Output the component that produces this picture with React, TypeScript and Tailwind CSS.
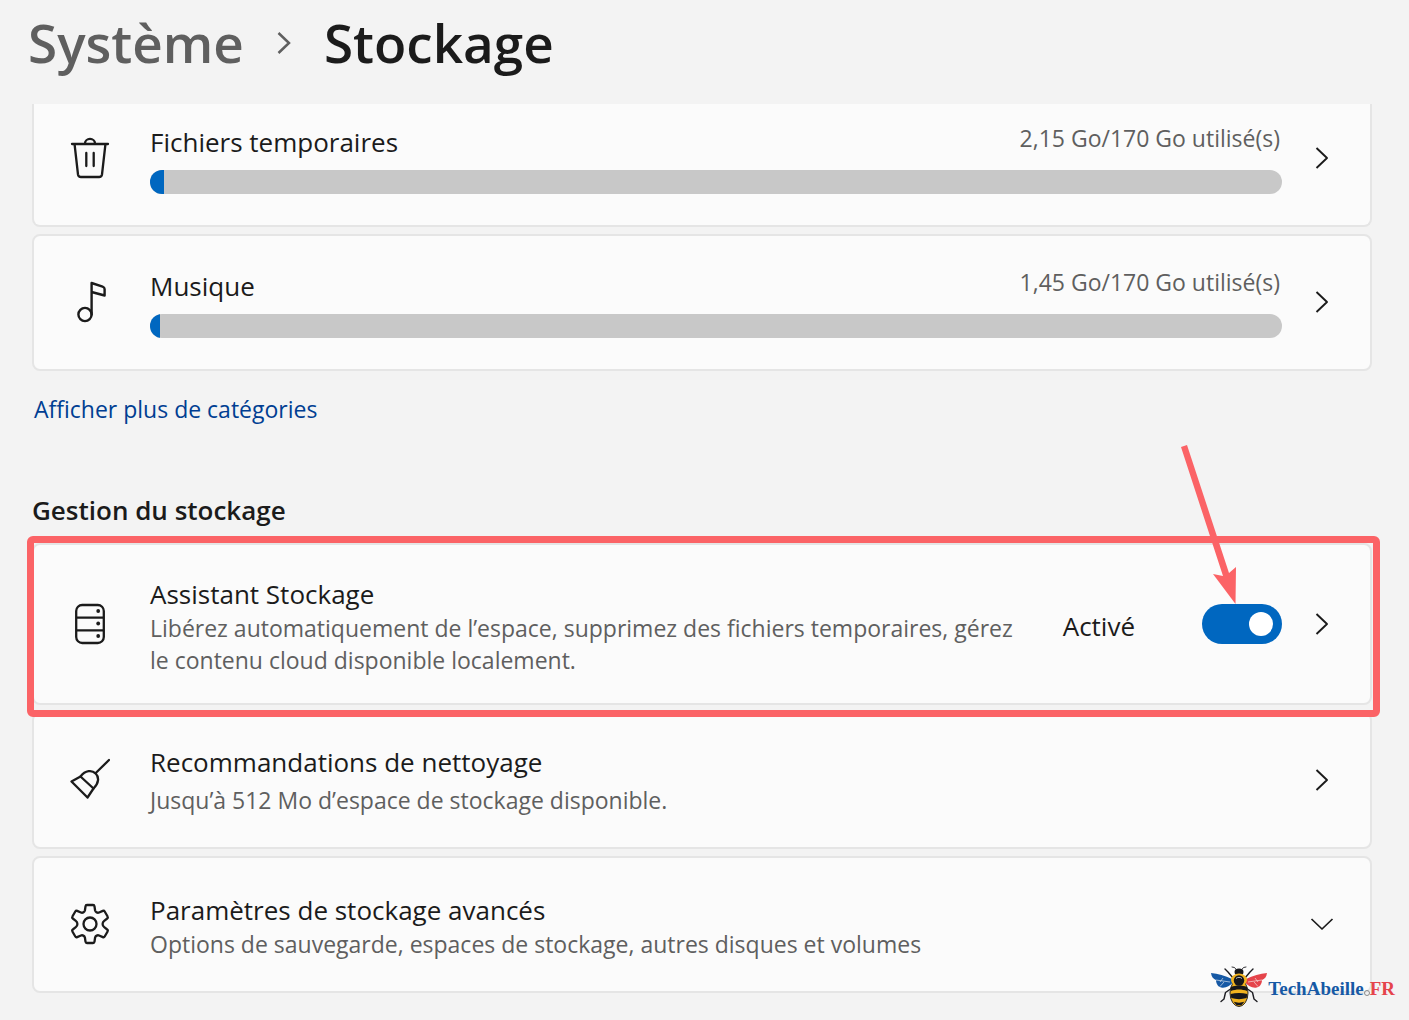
import { useState } from "react";
import type { ReactNode } from "react";

const usage = [
  { name: "Fichiers temporaires", label: "2,15 Go/170 Go utilisé(s)", used: 2.15, total: 170, icon: <TrashIcon /> },
  { name: "Musique", label: "1,45 Go/170 Go utilisé(s)", used: 1.45, total: 170, icon: <MusicIcon /> },
];

function TrashIcon() {
  return (
    <svg width="40" height="44" viewBox="0 0 40 44" fill="none" stroke="#1b1b1b" strokeWidth="2.3" strokeLinecap="round" strokeLinejoin="round">
      <path d="M2 8h36" />
      <path d="M15 7.5a5 4.6 0 0 1 10 0" />
      <path d="M4.6 8.5 8 38.5a3 3 0 0 0 3 2.5h18a3 3 0 0 0 3-2.5L35.4 8.5" />
      <path d="M16.3 17v13M23.7 17v13" />
    </svg>
  );
}

function MusicIcon() {
  return (
    <svg width="40" height="44" viewBox="0 0 40 44" fill="none" stroke="#1b1b1b" strokeWidth="2.4" strokeLinecap="round" strokeLinejoin="round">
      <circle cx="15" cy="34.5" r="6.6" />
      <path d="M21.6 34.5V3l11 3.6q2 .7 2 2.5v6.4L21.6 12" />
    </svg>
  );
}

function DrivesIcon() {
  return (
    <svg width="40" height="44" viewBox="0 0 40 44" fill="none" stroke="#1b1b1b" strokeWidth="2.3">
      <rect x="6.2" y="3" width="27.6" height="38" rx="6" />
      <path d="M6.2 15.7h27.6M6.2 28.3h27.6" />
      <g fill="#1b1b1b" stroke="none">
        <circle cx="28.2" cy="9" r="1.9" />
        <circle cx="28.2" cy="21.5" r="1.9" />
        <circle cx="28.2" cy="34" r="1.9" />
      </g>
    </svg>
  );
}

function BroomIcon() {
  return (
    <svg width="40" height="44" viewBox="0 0 40 44" fill="none" stroke="#1b1b1b" strokeWidth="2.3" strokeLinecap="round" strokeLinejoin="round">
      <path d="M39 2 25.5 15.3" />
      <path d="M10.5 18.5C15.5 12 22 12 25.5 15.3c3.7 3.7 3.7 9.5-2 15.2L17.5 39.5 1.5 23.5z" />
      <path d="M10.5 18.5 23.5 30.5" />
    </svg>
  );
}

function GearIcon() {
  return (
    <svg width="44" height="44" viewBox="0 0 44 44" fill="none" stroke="#1b1b1b" strokeWidth="2.3" strokeLinejoin="round">
      <circle cx="22" cy="22" r="6.5" />
      <path d="M19 3h6a1.500 1.500 0 0 1 1.500 1.300l.6 4.200a3 3 0 0 0 4 2l3.700-1.600a1.500 1.500 0 0 1 1.900.6l2.900 5a1.500 1.500 0 0 1-.4 2l-3 2.300a4 4 0 0 0 0 6.400l3 2.300a1.500 1.500 0 0 1 .4 2l-2.900 5a1.500 1.500 0 0 1-1.900.6l-3.700-1.600a3 3 0 0 0-4 2l-.6 4.200A1.500 1.500 0 0 1 25 41h-6a1.500 1.500 0 0 1-1.500-1.300l-.6-4.200a3 3 0 0 0-4-2l-3.700 1.600a1.500 1.500 0 0 1-1.900-.6l-2.900-5a1.500 1.500 0 0 1 .4-2l3-2.300a4 4 0 0 0 0-6.400l-3-2.300a1.500 1.500 0 0 1-.4-2l2.900-5a1.500 1.500 0 0 1 1.900-.6l3.700 1.600a3 3 0 0 0 4-2l.6-4.200A1.500 1.500 0 0 1 19 3z" />
    </svg>
  );
}

function ChevronRight() {
  return (
    <svg width="16" height="24" viewBox="0 0 16 24" fill="none" stroke="#1b1b1b" strokeWidth="1.9" strokeLinejoin="round">
      <path d="M2.5 2 13 12 2.5 22" />
    </svg>
  );
}

function ChevronDown() {
  return (
    <svg width="24" height="16" viewBox="0 0 24 16" fill="none" stroke="#1b1b1b" strokeWidth="1.7" strokeLinejoin="round">
      <path d="M1.5 3 12 13 22.5 3" />
    </svg>
  );
}

function Bee() {
  return (
    <svg width="58" height="44" viewBox="0 0 58 44">
      {/* legs and antennae */}
      <g fill="none" stroke="#1d1d22" strokeWidth="1.4" strokeLinecap="round" strokeLinejoin="round">
        <path d="M27 5.5 24.5 2.5 22 2M31 5.5 33.5 2.5 36 2" strokeWidth="0.9" />
        <path d="M23 13 18 7 15 4M35 13 40 7 43 4" />
        <path d="M22 23 15.5 27.5 14 34 11 36.5M36 23 42.5 27.5 44 34 47 36.5" />
      </g>
      {/* wings */}
      <path d="M22 14C15 11 8 8.5 1 8c.5 4 2.5 6 5 7 0 4.500 3 8 7 7.700 4-.4 7-2 9.500-4.700z" fill="#1659a5" />
      <path d="M36 14c7-3 14-5.500 21-6-.5 4-2.500 6-5 7 0 4.500-3 8-7 7.700-4-.4-7-2-9.500-4.700z" fill="#e5444b" />
      <g fill="none" stroke="#f7f7f7" strokeWidth="0.6">
        <path d="M6 15 20 17M10 21.5 14 17M13 13 10 17" />
        <path d="M52 15 38 17M48 21.5 44 17M45 13 48 17" />
      </g>
      {/* body */}
      <ellipse cx="29" cy="7" rx="4.5" ry="3.5" fill="#17171b" />
      <ellipse cx="29" cy="28" rx="9" ry="13.5" fill="#f2b31f" stroke="#17171b" strokeWidth="0.9" />
      <ellipse cx="29" cy="15" rx="8" ry="6.5" fill="#f2b31f" />
      <circle cx="29" cy="15.5" r="5.2" fill="#17171b" />
      <path d="M26 13.5c1.5-1.5 4.5-1.5 6 0" stroke="#b9bec6" strokeWidth="1" fill="none" />
      <path d="M21 22c5-2 11-2 16 0v4c-5-2-11-2-16 0zM20.7 29c5-1.5 11.600-1.500 16.600 0l-.6 4c-5 1.500-10.400 1.500-15.400 0zM23.500 36.500c3 1.500 8 1.500 11 0L32 39.800c-2 .7-4 .7-6 0z" fill="#17171b" />
    </svg>
  );
}

function Row({ icon, children, end, className }: { icon: ReactNode; children: ReactNode; end: ReactNode; className?: string }) {
  return (
    <div className={`flex items-center rounded-lg border-2 border-[#e5e5e5] bg-[#fbfbfb] ${className ?? ""}`}>
      <div className="mr-1 flex w-28 shrink-0 justify-center">{icon}</div>
      <div className="min-w-0 flex-1">{children}</div>
      <div className="flex w-22 shrink-0 justify-center pr-2">{end}</div>
    </div>
  );
}

export default function App() {
  const [enabled, setEnabled] = useState(true);

  return (
    <div className="relative min-h-screen bg-[#f3f3f3] pb-7 font-['Open_Sans',sans-serif] text-[#1b1b1b]">
      <header className="flex h-26 items-center pb-[18px] pl-7 text-[53px] font-semibold">
        <a href="#systeme" className="text-[#5f5f5f]">Système</a>
        <svg className="mx-8" width="16" height="24" viewBox="0 0 16 24" fill="none" stroke="#5f5f5f" strokeWidth="2.5">
          <path d="M2.5 2 13 12 2.5 22" />
        </svg>
        <h1>Stockage</h1>
      </header>

      <main className="pr-[37px] pl-8">
        <section className="flex flex-col gap-[7px]">
          {usage.map((item, i) => (
            <Row
              key={item.name}
              icon={item.icon}
              end={<ChevronRight />}
              className={i === 0 ? "h-[123px] rounded-t-none border-t-0 pb-3.5" : "h-[137px] pb-0.5"}
            >
              <div className="flex items-start justify-between">
                <span className="text-[26px] leading-10">{item.name}</span>
                <span className="pr-0.5 text-[23px] leading-8 text-[#5f5f5f]">{item.label}</span>
              </div>
              <div
                role="progressbar"
                aria-label={item.name}
                aria-valuenow={item.used}
                aria-valuemax={item.total}
                className="mt-2 h-6 overflow-hidden rounded-full bg-[#c8c8c8]"
              >
                <div className="h-full bg-[#0067c0]" style={{ width: `${(item.used / item.total) * 100}%` }} />
              </div>
            </Row>
          ))}
        </section>

        <a href="#categories" className="mt-5 inline-block pl-0.5 text-[23px] leading-9 text-[#003e92]">
          Afficher plus de catégories
        </a>

        <h2 className="mt-[63px] mb-[13px] text-[26px] leading-10 font-semibold">Gestion du stockage</h2>

        <section className="flex flex-col gap-[7px]">
          <div className="relative z-10">
            <Row icon={<DrivesIcon />} end={<ChevronRight />} className="h-[162px]">
              <div className="flex items-center">
                <div className="w-[880px] pt-1">
                  <h3 className="text-[26px] leading-9">Assistant Stockage</h3>
                  <p className="text-[23px] leading-8 text-[#5f5f5f]">
                    Libérez automatiquement de l’espace, supprimez des fichiers temporaires, gérez le contenu cloud disponible localement.
                  </p>
                </div>
                <label htmlFor="assistant" className="ml-auto pt-1 pr-[67px] text-[26px]">
                  {enabled ? "Activé" : "Désactivé"}
                </label>
                <input
                  id="assistant"
                  type="checkbox"
                  role="switch"
                  checked={enabled}
                  onChange={(e) => setEnabled(e.target.checked)}
                  className="flex h-10 w-20 shrink-0 appearance-none items-center rounded-full bg-[#8a8a8a] px-[9px] before:size-6 before:rounded-full before:bg-white checked:justify-end checked:bg-[#0067c0]"
                />
              </div>
            </Row>
            {/* highlight frame and arrow */}
            <div className="pointer-events-none absolute -top-[7px] -right-2 -bottom-3 -left-[5px] rounded-md border-[7px] border-[#fb6366]" />
            <svg className="pointer-events-none absolute -top-[102px] right-[134px]" width="66" height="166" viewBox="0 0 66 166" fill="#fb6366">
              <path d="M9 6 15 4 57 132 64 126 63.5 163 41 133 51 135z" />
            </svg>
          </div>

          <Row icon={<BroomIcon />} end={<ChevronRight />} className="h-[137px] pb-0.5">
            <h3 className="text-[26px] leading-10">Recommandations de nettoyage</h3>
            <p className="text-[23px] leading-9 text-[#5f5f5f]">Jusqu’à 512 Mo d’espace de stockage disponible.</p>
          </Row>

          <Row icon={<GearIcon />} end={<ChevronDown />} className="h-[137px] pb-0.5">
            <h3 className="pt-1 text-[26px] leading-9">Paramètres de stockage avancés</h3>
            <p className="text-[23px] leading-8 text-[#5f5f5f]">Options de sauvegarde, espaces de stockage, autres disques et volumes</p>
          </Row>
        </section>
      </main>

      <a
        href="#techabeille"
        className="absolute right-3.5 bottom-3 flex items-center font-['Liberation_Serif',serif] text-[19px] font-bold text-[#1659a5]"
      >
        <Bee />
        <span className="pt-1">TechAbeille</span>
        <span className="mt-3 size-1.5 rounded-full border border-[#8a8a8a]" />
        <span className="pt-1 text-[#e5444b]">FR</span>
      </a>
    </div>
  );
}
